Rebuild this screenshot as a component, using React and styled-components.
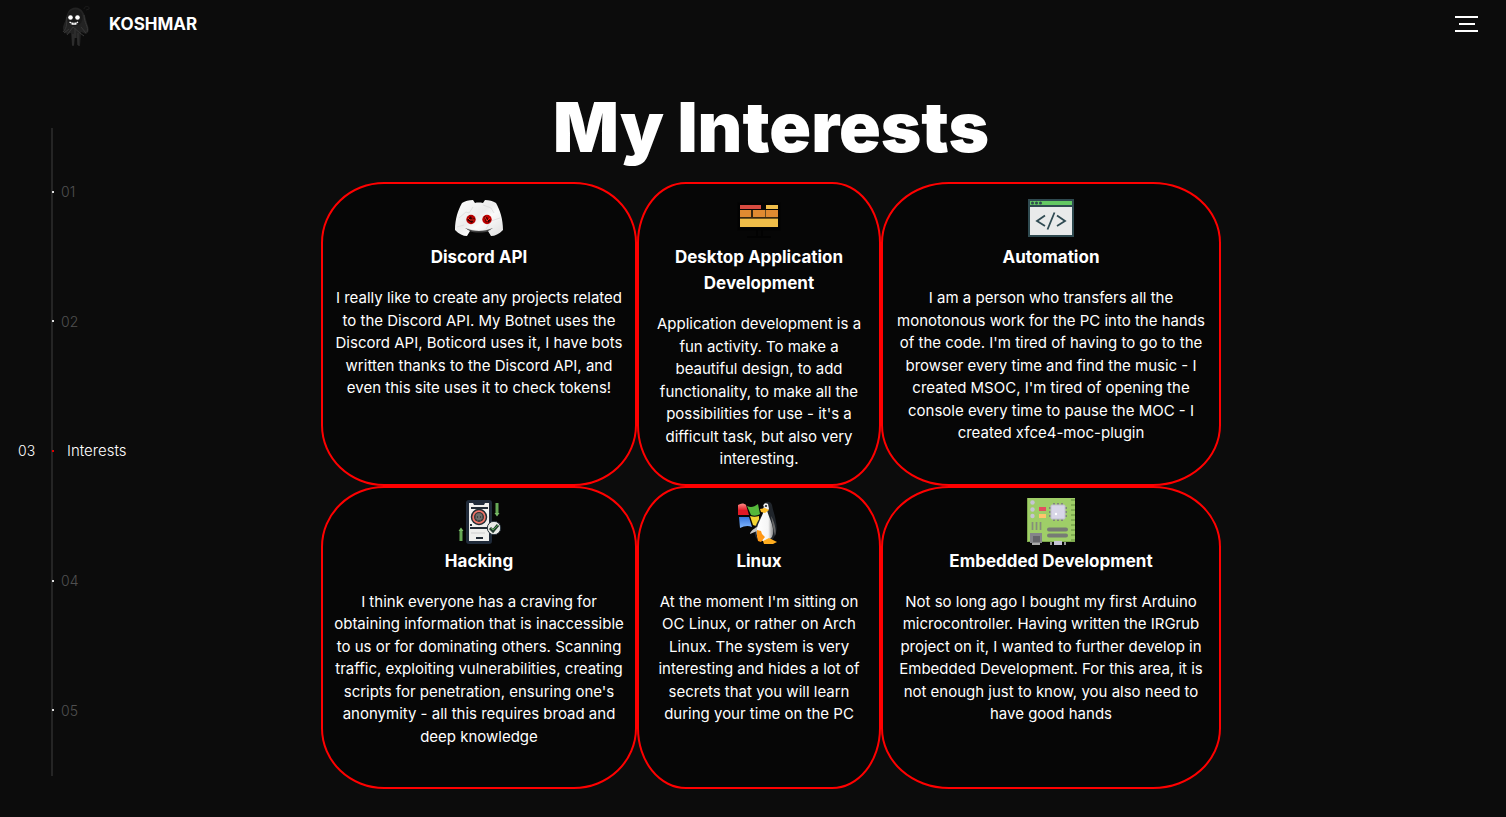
import React from "react";
import styled, { createGlobalStyle } from "styled-components";

const GlobalStyle = createGlobalStyle`
  *, *::before, *::after { box-sizing: border-box; }
  body {
    margin: 0;
    background: #0c0c0c;
    color: #fff;
    font-family: Inter, "Liberation Sans", sans-serif;
    font-size: 15px;
    line-height: 1.5;
  }
`;

const Page = styled.div`
  display: flex;
  flex-direction: column;
  min-height: 100vh;
`;

const Header = styled.header`
  display: flex;
  align-items: center;
  justify-content: space-between;
  height: 48px;
  padding: 0 28px 0 60px;
`;

const Brand = styled.a`
  display: flex;
  align-items: center;
  gap: 17px;
  color: #fff;
  font-size: 17px;
  font-weight: 700;
  line-height: 26px;
  text-decoration: none;
`;

const MenuButton = styled.button`
  display: flex;
  flex-direction: column;
  align-items: center;
  gap: 5px;
  width: 23px;
  padding: 0;
  border: 0;
  background: none;
  cursor: pointer;
`;

const MenuBar = styled.span`
  width: ${({ $short }) => ($short ? "16px" : "23px")};
  height: 2px;
  background: #fff;
`;

const Body = styled.div`
  display: flex;
  flex: 1;
`;

const Timeline = styled.nav`
  display: flex;
  width: 144px;
  padding: 80px 0 41px;
`;

const Steps = styled.ol`
  position: relative;
  display: flex;
  flex: 1;
  flex-direction: column;
  margin: 0;
  padding: 0;
  list-style: none;

  &::before {
    content: "";
    position: absolute;
    inset: 0 auto 0 51px;
    width: 2px;
    background: #252525;
  }
`;

const Step = styled.li`
  display: flex;
  flex: 1;
  align-items: center;
  padding-bottom: 2px;
`;

const StepLink = styled.a`
  position: relative;
  display: grid;
  grid-template-columns: 33px 3px 1fr;
  align-items: center;
  width: 100%;
  padding-left: 18px;
  color: ${({ $active }) => ($active ? "#fff" : "#505050")};
  font-size: 14px;
  font-weight: 300;
  text-decoration: none;
`;

const StepDot = styled.span`
  width: 2px;
  height: 2px;
  margin-left: 1px;
  background: ${({ $active }) => ($active ? "#e00000" : "#ddd")};
`;

const StepText = styled.span`
  padding-left: ${({ $active }) => ($active ? "13px" : "7px")};
  font-size: ${({ $active }) => ($active ? "15px" : "14px")};
`;

const Main = styled.main`
  display: flex;
  flex: 1;
  flex-direction: column;
  align-items: center;
  padding: 34px 108px 27px 0;
`;

const Title = styled.h1`
  margin: 0 0 10px;
  font-size: 69px;
  font-weight: 900;
  line-height: 90px;
`;

const Cards = styled.div`
  display: grid;
  grid-template-columns: 316fr 244fr 340fr;
  grid-auto-rows: 1fr;
  width: 900px;
`;

const Card = styled.article`
  display: flex;
  flex-direction: column;
  align-items: center;
  padding: 10px 10px 13px;
  border: 2px solid #f00;
  border-radius: 20%;
  background: #060606;
  text-align: center;

  svg { display: block; flex: none; }
`;

const CardTitle = styled.h2`
  margin: 2px 0 17px;
  font-size: 17px;
  font-weight: 700;
  line-height: 26px;
  white-space: pre;
`;

const CardText = styled.p`
  margin: 0;
  white-space: pre;
`;

const Ghost = () => (
  <svg width="32" height="46" viewBox="0 -4 32 46" aria-hidden="true">
    <path d="M24 4c1-4 6-3 5 0l-3 1" fill="none" stroke="#1c1c1c" />
    <path d="M8 7C11 1 20 1 23 7c3 5 3 9 5 14 1 4 1 6-2 8l-5-2-1 14h-2l-1-8-2 0-1 8h-2l-1-13-4 1c-4-2-5-6-3-10C6 15 6 11 8 7z" fill="#232323" />
    <path d="M7 12c-1 6 1 10-4 15M24 10c0 8 5 12 3 17M7 30l6-8 7 6 4 3M13 29v11M18 28v12M4 28l5-4M21 22l5 6M15 23v10" fill="none" stroke="#373737" strokeWidth="1" />
    <path d="M8 9c3-6 12-6 14 0 2 5-1 12-7 12S6 15 8 9z" fill="#1a1a1a" />
    <circle cx="10.500" cy="12.500" r="2.300" fill="#fff" />
    <circle cx="17.500" cy="12.500" r="2.300" fill="#fff" />
    <path d="M9.500 17c3 2 6 2 8.500 0M11 18.500c2 1 4 1 6 0" fill="none" stroke="#fff" strokeWidth="1.400" />
    <path d="M11.500 17v3M14 17v3M16.500 17v3" stroke="#444" strokeWidth=".5" />
  </svg>
);

const DiscordIcon = () => (
  <svg width="48" height="48" viewBox="0 0 48 48" aria-hidden="true">
    <defs>
      <linearGradient id="marble" x1="0" y1="0" x2="1" y2="1">
        <stop offset="0" stopColor="#fff" />
        <stop offset=".45" stopColor="#ececec" />
        <stop offset=".6" stopColor="#fafafa" />
        <stop offset="1" stopColor="#dedede" />
      </linearGradient>
    </defs>
    <path d="M18 6c-4 0-8 1-11 3C3 16 0 25 0 36c4 4 8 6 12 6l3-5-5-3c9 4 19 4 28 0l-5 3 3 5c4 0 8-2 12-6 0-11-3-20-7-27-3-2-7-3-11-3l-2 3c-3-.6-6-.6-8 0z" fill="url(#marble)" />
    <path d="M4 24l7-6 3 1 4-6M31 35l5-8 9-3M28 11l8 3 3 5M2 33l7-2" fill="none" stroke="#dcdcdc" strokeWidth=".8" />
    <circle cx="16" cy="25.500" r="4.700" fill="#b80000" />
    <circle cx="32" cy="25.500" r="4.700" fill="#c00000" />
    <path d="M12 26l4-4 1 3 3-1-3 5zM29 22l4 2-2 5M32 25l4 1-3 3" fill="#350000" />
    <path d="M13 24l2 2 4 0M30 23l2 4 3-3" fill="none" stroke="#ff2a18" />
    <path d="M12 34c8 3 17 3 25 0l-2 3c-7 2-15 2-21 0z" fill="#aaa" opacity=".35" />
  </svg>
);

const BricksIcon = () => (
  <svg width="48" height="48" viewBox="0 0 48 48" aria-hidden="true">
    <path d="M4 10h40v25H4z" fill="none" stroke="#020202" strokeWidth="3" />
    <path d="M22 36v6M27 36v6M12 43h24" fill="none" stroke="#020202" strokeWidth="2" />
    <path d="M5 11h21v4H5z" fill="#d84b40" />
    <path d="M31 11h12v4H31z" fill="#efbd49" />
    <path d="M5 16h11v7H5zM18 16h12v7H18zM31 16h12v7H31z" fill="#e08a31" />
    <path d="M5 24.500h38V33H5z" fill="#efbd49" />
    <path d="M17 16v7M30.500 16v7M5 24h38" stroke="#68491d" />
  </svg>
);

const CodeIcon = () => (
  <svg width="48" height="48" viewBox="0 0 48 48" aria-hidden="true">
    <path d="M2 6h44v36H2z" fill="#e9eaea" stroke="#2f4a50" strokeWidth="2" />
    <path d="M3 7h42v4H3z" fill="#64c963" />
    <path d="M2 12h44" stroke="#2f4a50" strokeWidth="2" />
    <circle cx="5.500" cy="9" r="1.500" fill="#2f4a50" />
    <circle cx="9.500" cy="9" r="1.500" fill="#2f4a50" />
    <circle cx="13.500" cy="9" r="1.500" fill="#2f4a50" />
    <path d="M18 21.500l-8 5.500 8 5M30 21.500l8 5.500-8 5M27.500 18.500l-7 17" fill="none" stroke="#304b53" strokeWidth="1.800" />
  </svg>
);

const PhoneIcon = () => (
  <svg width="48" height="48" viewBox="0 0 48 48" aria-hidden="true">
    <rect x="12.500" y="3.500" width="23" height="41" rx="1.500" fill="#f0f0ee" stroke="#202b3a" strokeWidth="3" />
    <path d="M17 3h14l-2 4H19z" fill="#202b3a" />
    <path d="M16 10h17M15 30h18M21 40h7M16 26v2" fill="none" stroke="#222b35" strokeWidth="2" />
    <path d="M16 35h14" stroke="#bbb" strokeWidth=".6" />
    <circle cx="24" cy="19" r="7.500" fill="#f17468" stroke="#202b32" strokeWidth="1.500" />
    <circle cx="24" cy="19" r="5" fill="#343535" />
    <path d="M20.500 18c0-4 7-4 7 0v3l-2 1v2h-3v-2l-2-1z" fill="#6d6d6b" />
    <path d="M22 19h1M25 19h1M24 22v2" stroke="#171717" />
    <path d="M42 5v11M6 32v11" stroke="#67a956" strokeWidth="3" />
    <path d="M39.500 15L42 18.500l2.500-3.500zM3.500 33L6 29.500l2.500 3.500z" fill="#78ba67" />
    <circle cx="39" cy="30" r="6.700" fill="#e9eae6" stroke="#253039" />
    <path d="M35 30l3 3 5-6" fill="none" stroke="#253e31" strokeWidth="3" />
    <path d="M36 30l2 2 5-5" fill="none" stroke="#56a953" strokeWidth="1" />
  </svg>
);

const TuxIcon = () => (
  <svg width="48" height="48" viewBox="0 0 48 48" aria-hidden="true">
    <defs>
      <linearGradient id="belly"><stop stopColor="#fff" /><stop offset=".7" stopColor="#f5f5f5" /><stop offset="1" stopColor="#888" /></linearGradient>
      <linearGradient id="pane-red" x2="0" y2="1"><stop stopColor="#ff8b86" /><stop offset=".6" stopColor="#e11925" /></linearGradient>
      <linearGradient id="pane-blue" x2="0" y2="1"><stop stopColor="#3776dc" /><stop offset="1" stopColor="#81b7ff" /></linearGradient>
    </defs>
    <path d="M3 7c3-2 6-2 8 0l3 10H3z" fill="url(#pane-red)" />
    <path d="M12 8c4 2 7 1 11-2l2 10c-3 2-6 2-9 1z" fill="#55b83b" />
    <path d="M4 19h10l3 10c-4-2-8-1-12 1z" fill="url(#pane-blue)" />
    <path d="M15 18c3 1 6 1 9 0v8c-2 2-4 2-6 1z" fill="#f5d633" />
    <g transform="translate(1 1)">
      <path d="M27 9c-1-6 7-9 9-3 1 6 3 10 4 17 2 9-1 17-7 20l-11-2c-5-4-4-12 0-19 3-5 6-8 5-13z" fill="#20252b" />
      <path d="M28 11c-2 9-11 18-6 28 4 5 11 3 14-1 4-9-3-18-5-27z" fill="url(#belly)" />
      <path d="M27 9c0-4 2-6 5-4l1 5c-2 3-4 2-6-1z" fill="#eee" />
      <circle cx="30" cy="7" r="1" fill="#111" /><circle cx="27.500" cy="8" r=".8" fill="#111" />
      <path d="M24 10l5-1 4 2-4 3-4-1z" fill="#ffbd25" />
      <path d="M21 31l4 1 1 3 3 3-4 5-3-1-1-5z" fill="#ff9815" />
      <path d="M27 42l6-3 8 4-4 2h-9z" fill="#ffad1f" />
      <path d="M21 28c-4 2-7 5-7 7l7-3" fill="#c9c9c8" />
      <path d="M35 17c3 5 6 14 4 20l-2-9" fill="#666" />
    </g>
  </svg>
);

const BoardIcon = () => (
  <svg width="48" height="48" viewBox="0 0 48 48" aria-hidden="true">
    <path d="M0 0h48v44H0z" fill="#9fce68" />
    <path d="M0 0h1v44H0zM0 43h48v1H0z" fill="#7da94e" />
    <path d="M44 1h4v2h-4zM44 6h4v2h-4zM44 11h4v2h-4zM44 16h4v2h-4zM44 21h4v2h-4zM44 26h4v2h-4zM44 31h4v2h-4zM44 36h4v2h-4zM44 41h4v2h-4z" fill="#7fae51" />
    <g fill="#c6c5d5"><circle cx="5.500" cy="4.500" r="2.200" /><circle cx="5.500" cy="11.500" r="2.200" /><circle cx="5.500" cy="18" r="2.200" /></g>
    <path d="M12 9h7v4h-7z" fill="#e04f5f" /><path d="M12 16h7v4h-7z" fill="#ffc66c" />
    <path d="M27 5v18M31 5v18M35 5v18M22 10h18M22 14h18M22 18h18" stroke="#818a76" strokeWidth="2" />
    <rect x="24" y="7" width="14" height="14" rx="1" fill="#d8d6e7" stroke="#c1bfd0" />
    <circle cx="29" cy="16" r="1.200" fill="#fff" />
    <path d="M5.500 24v8M9.500 24v8M13.500 24v8" stroke="#858d7a" strokeWidth="1.700" />
    <path d="M22 31.500h17M22 37.500h17" stroke="#777b75" strokeWidth="4" strokeLinecap="round" />
    <path d="M3 35h12v10H3z" fill="#85858a" /><path d="M6 38h7v6H6z" fill="#65656a" /><path d="M5 45h8v2H5z" fill="#aaa" />
    <path d="M23 44h2v3h-2zM37 44h2v3h-2z" fill="#999" /><path d="M27 43h8v4h-8z" fill="#c6c4d5" />
  </svg>
);

const steps = [
  { id: "01" },
  { id: "02" },
  { id: "03", label: "Interests" },
  { id: "04" },
  { id: "05" },
];

const interests = [
  {
    Icon: DiscordIcon,
    title: "Discord API",
    text: `I really like to create any projects related
to the Discord API. My Botnet uses the
Discord API, Boticord uses it, I have bots
written thanks to the Discord API, and
even this site uses it to check tokens!`,
  },
  {
    Icon: BricksIcon,
    title: "Desktop Application\nDevelopment",
    text: `Application development is a
fun activity. To make a
beautiful design, to add
functionality, to make all the
possibilities for use - it's a
difficult task, but also very
interesting.`,
  },
  {
    Icon: CodeIcon,
    title: "Automation",
    text: `I am a person who transfers all the
monotonous work for the PC into the hands
of the code. I'm tired of having to go to the
browser every time and find the music - I
created MSOC, I'm tired of opening the
console every time to pause the MOC - I
created xfce4-moc-plugin`,
  },
  {
    Icon: PhoneIcon,
    title: "Hacking",
    text: `I think everyone has a craving for
obtaining information that is inaccessible
to us or for dominating others. Scanning
traffic, exploiting vulnerabilities, creating
scripts for penetration, ensuring one's
anonymity - all this requires broad and
deep knowledge`,
  },
  {
    Icon: TuxIcon,
    title: "Linux",
    text: `At the moment I'm sitting on
OC Linux, or rather on Arch
Linux. The system is very
interesting and hides a lot of
secrets that you will learn
during your time on the PC`,
  },
  {
    Icon: BoardIcon,
    title: "Embedded Development",
    text: `Not so long ago I bought my first Arduino
microcontroller. Having written the IRGrub
project on it, I wanted to further develop in
Embedded Development. For this area, it is
not enough just to know, you also need to
have good hands`,
  },
];

export default function App() {
  return (
    <Page>
      <GlobalStyle />
      <Header>
        <Brand href="#home">
          <Ghost />
          KOSHMAR
        </Brand>
        <MenuButton type="button" aria-label="Menu">
          <MenuBar />
          <MenuBar $short />
          <MenuBar />
        </MenuButton>
      </Header>
      <Body>
        <Timeline aria-label="Sections">
          <Steps>
            {steps.map(({ id, label }) => (
              <Step key={id}>
                <StepLink href={`#section-${id}`} $active={!!label}>
                  <span>{label ? id : ""}</span>
                  <StepDot $active={!!label} />
                  <StepText $active={!!label}>{label || id}</StepText>
                </StepLink>
              </Step>
            ))}
          </Steps>
        </Timeline>
        <Main>
          <Title>My Interests</Title>
          <Cards>
            {interests.map(({ Icon, title, text }) => (
              <Card key={title}>
                <Icon />
                <CardTitle>{title}</CardTitle>
                <CardText>{text}</CardText>
              </Card>
            ))}
          </Cards>
        </Main>
      </Body>
    </Page>
  );
}
